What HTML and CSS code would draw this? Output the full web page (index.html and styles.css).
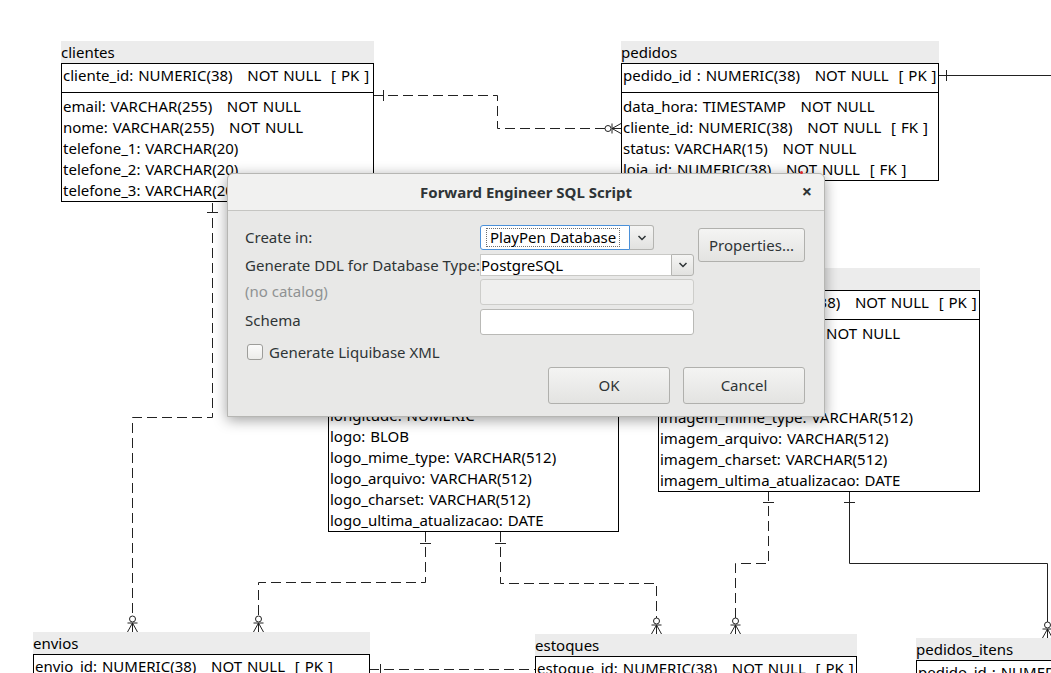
FILE: index.html
```html
<!DOCTYPE html>
<html>
<head>
<meta charset="utf-8">
<link rel="stylesheet" href="styles.css">
</head>
<body>
<div class="canvas">
  <svg class="links" width="1051" height="673" viewBox="0 0 1051 673">
    <defs>
      <g id="cf">
        <circle cx="0" cy="-13" r="3" fill="none" stroke="#222" stroke-width="1"/>
        <path d="M-5 -9 H5 M0 -9 L-5 0 M0 -9 V0 M0 -9 L5 0" fill="none" stroke="#222" stroke-width="1"/>
      </g>
    </defs>
    <g fill="none" stroke="#222" stroke-width="1">
      <path class="dash" d="M373 95.5 H497.5 V128.5 H608"/>
      <path d="M383.5 90 V101"/>
      <path d="M938 75.5 H1051"/>
      <path d="M946.5 70 V81"/>
      <path class="dash" d="M212.5 203 V417.5 H132.5 V616"/>
      <path d="M207 212.5 H218"/>
      <path class="dash" d="M425.5 532 V582.5 H258.5 V616"/>
      <path d="M420 543.5 H431"/>
      <path class="dash" d="M500.5 532 V583.5 H656.5 V618"/>
      <path d="M495 543.5 H506"/>
      <path class="dash" d="M768.5 491 V563.5 H735.5 V618"/>
      <path d="M763 502.5 H774"/>
      <path d="M849.5 491 V563.5 H1047.5 V622"/>
      <path d="M844 502.5 H855"/>
      <path class="dash" d="M369 669.5 H535"/>
      <path d="M380.5 664 V675"/>
    </g>
    <use href="#cf" transform="translate(621 128.5) rotate(-90)"/>
    <use href="#cf" transform="translate(132.5 632)"/>
    <use href="#cf" transform="translate(258.5 632)"/>
    <use href="#cf" transform="translate(656.5 634)"/>
    <use href="#cf" transform="translate(735.5 634)"/>
    <use href="#cf" transform="translate(1047.5 638)"/>
  </svg>

  <div class="tbl t-clientes">
    <div class="tbl-title">clientes</div>
    <div class="tbl-box">
      <div class="pk">cliente_id: NUMERIC(38)   NOT NULL  [ PK ]</div>
      <div class="cols">
        <div>email: VARCHAR(255)   NOT NULL</div>
        <div>nome: VARCHAR(255)   NOT NULL</div>
        <div>telefone_1: VARCHAR(20)</div>
        <div>telefone_2: VARCHAR(20)</div>
        <div>telefone_3: VARCHAR(20)</div>
      </div>
    </div>
  </div>

  <div class="tbl t-pedidos">
    <div class="tbl-title">pedidos</div>
    <div class="tbl-box">
      <div class="pk">pedido_id : NUMERIC(38)   NOT NULL  [ PK ]</div>
      <div class="cols">
        <div>data_hora: TIMESTAMP   NOT NULL</div>
        <div>cliente_id: NUMERIC(38)   NOT NULL  [ FK ]</div>
        <div>status: VARCHAR(15)   NOT NULL</div>
        <div>loja_id: NUMERIC(38)   NOT NULL  [ FK ]</div>
      </div>
    </div>
  </div>

  <div class="tbl t-lojas">
    <div class="tbl-title">lojas</div>
    <div class="tbl-box">
      <div class="pk">loja_id: NUMERIC(38)   NOT NULL  [ PK ]</div>
      <div class="cols">
        <div>nome: VARCHAR(255)   NOT NULL</div>
        <div>cnpj: VARCHAR(14)   NOT NULL</div>
        <div>endereco: VARCHAR(255)</div>
        <div>cidade: VARCHAR(100)</div>
        <div>estado: VARCHAR(2)</div>
        <div>telefone: VARCHAR(20)</div>
        <div>latitude: NUMERIC</div>
        <div>longitude: NUMERIC</div>
        <div>logo: BLOB</div>
        <div>logo_mime_type: VARCHAR(512)</div>
        <div>logo_arquivo: VARCHAR(512)</div>
        <div>logo_charset: VARCHAR(512)</div>
        <div>logo_ultima_atualizacao: DATE</div>
      </div>
    </div>
  </div>

  <div class="tbl t-produtos">
    <div class="tbl-title">produtos</div>
    <div class="tbl-box">
      <div class="pk">produto_id: NUMERIC(38)   NOT NULL  [ PK ]</div>
      <div class="cols">
        <div>nome: VARCHAR(255)   NOT NULL</div>
        <div>preco: NUMERIC(10, 2)</div>
        <div>descricao: TEXT</div>
        <div>imagem: BLOB</div>
        <div>imagem_mime_type: VARCHAR(512)</div>
        <div>imagem_arquivo: VARCHAR(512)</div>
        <div>imagem_charset: VARCHAR(512)</div>
        <div>imagem_ultima_atualizacao: DATE</div>
      </div>
    </div>
  </div>

  <div class="tbl t-envios">
    <div class="tbl-title">envios</div>
    <div class="tbl-box">
      <div class="pk">envio_id: NUMERIC(38)   NOT NULL  [ PK ]</div>
    </div>
  </div>

  <div class="tbl t-estoques">
    <div class="tbl-title">estoques</div>
    <div class="tbl-box">
      <div class="pk">estoque_id: NUMERIC(38)   NOT NULL  [ PK ]</div>
    </div>
  </div>

  <div class="tbl t-itens">
    <div class="tbl-title">pedidos_itens</div>
    <div class="tbl-box">
      <div class="pk">pedido_id : NUMERIC(38)   NOT NULL  [ PK ]</div>
    </div>
  </div>

  <div class="dialog">
    <div class="dlg-title">
      <span>Forward Engineer SQL Script</span>
      <span class="dlg-close">×</span>
    </div>
    <div class="dlg-body">
      <div class="form">
        <div class="lbl l1">Create in:</div>
        <div class="combo-a">
          <div class="combo-a-field"><span class="focus">PlayPen Database</span></div>
          <div class="arrow-btn"><svg width="10" height="6" viewBox="0 0 10 6"><path d="M1.5 1 L5 4.5 L8.5 1" fill="none" stroke="#2e3436" stroke-width="1.5"/></svg></div>
        </div>
        <div class="btn props">Properties...</div>

        <div class="lbl l2">Generate DDL for Database Type:</div>
        <div class="combo-b">
          <div class="combo-b-field">PostgreSQL</div>
          <div class="arrow-btn small"><svg width="10" height="6" viewBox="0 0 10 6"><path d="M1.5 1 L5 4.5 L8.5 1" fill="none" stroke="#2e3436" stroke-width="1.5"/></svg></div>
        </div>

        <div class="lbl l3 muted">(no catalog)</div>
        <div class="field disabled"></div>

        <div class="lbl l4">Schema</div>
        <div class="field schema"></div>
      </div>
      <div class="check-row">
        <span class="checkbox"></span>
        <span>Generate Liquibase XML</span>
      </div>
      <div class="actions">
        <div class="btn big">OK</div>
        <div class="btn big">Cancel</div>
      </div>
    </div>
  </div>
  <div class="reddot"></div>
</div>
</body>
</html>
```

FILE: styles.css
```css
html, body {
  margin: 0;
  padding: 0;
  background: #ffffff;
}

.canvas {
  position: relative;
  width: 1051px;
  height: 673px;
  overflow: hidden;
  background: #ffffff;
  font-family: "Noto Sans", "DejaVu Sans", sans-serif;
}

.links {
  position: absolute;
  left: 0;
  top: 0;
}

.links .dash {
  stroke-dasharray: 10 5;
}

/* ---------- diagram tables ---------- */
.tbl {
  position: absolute;
  box-sizing: border-box;
  font-size: 15px;
  word-spacing: 1px;
  color: #000;
}

.tbl-title {
  height: 22px;
  line-height: 22px;
  background: #ececec;
  white-space: pre;
  overflow: hidden;
}

.tbl-box {
  border: 1px solid #000;
  background: #ffffff;
}

.pk {
  white-space: pre;
  line-height: 21px;
  height: 21px;
  padding: 1px 0 6px 1px;
  border-bottom: 1px solid #000;
  overflow: hidden;
}

.cols {
  padding: 3px 0 0 1px;
}

.cols div {
  white-space: pre;
  line-height: 21px;
  height: 21px;
  overflow: hidden;
}

.t-clientes { left: 61px; top: 41px; width: 313px; }
.t-pedidos { left: 621px; top: 41px; width: 318px; }
.t-lojas { left: 328px; top: 203px; width: 291px; }
.t-produtos { left: 658px; top: 268px; width: 322px; }
.t-envios { left: 33px; top: 632px; width: 337px; }
.t-estoques { left: 535px; top: 634px; width: 322px; }
.t-itens { left: 916px; top: 638px; width: 200px; }

/* ---------- dialog ---------- */
.dialog {
  position: absolute;
  left: 227px;
  top: 173px;
  width: 598px;
  height: 244px;
  box-sizing: border-box;
  background: #e8e8e7;
  border: 1px solid #b6b6b3;
  border-radius: 6px 6px 0 0;
  box-shadow: 0 3px 14px rgba(0, 0, 0, 0.38);
  color: #2e3436;
  font-family: "Noto Sans", "DejaVu Sans", sans-serif;
  font-size: 15px;
  display: flex;
  flex-direction: column;
}

.dlg-title {
  height: 36px;
  flex: none;
  background: #f1f1f0;
  border-bottom: 1px solid #c5c5c2;
  border-radius: 6px 6px 0 0;
  display: flex;
  align-items: center;
  justify-content: center;
  position: relative;
  font-weight: bold;
  font-size: 15px;
  color: #2e3436;
}

.dlg-close {
  position: absolute;
  right: 12px;
  top: 7px;
  font-size: 18px;
  font-weight: bold;
  color: #2e3436;
  line-height: 20px;
}

.dlg-body {
  padding: 14px 19px 12px 17px;
  display: flex;
  flex-direction: column;
}

.form {
  display: grid;
  grid-template-columns: 231px 214px 107px;
  column-gap: 4px;
  grid-template-rows: 25px 22px 26px 26px;
  row-gap: 3.5px;
}

.lbl {
  align-self: center;
  white-space: nowrap;
}

.l1 { grid-row: 1; grid-column: 1; margin-top: -2px; }
.l2 { grid-row: 2; grid-column: 1; }
.l3 { grid-row: 3; grid-column: 1; margin-top: -3px; }
.l4 { grid-row: 4; grid-column: 1; margin-top: -4px; }

.muted { color: #8f9293; }

.combo-a {
  grid-row: 1;
  grid-column: 2;
  display: flex;
  width: 174px;
}

.combo-a-field {
  flex: 1;
  box-sizing: border-box;
  background: #ffffff;
  border: 1px solid #4a90d9;
  border-radius: 3px 0 0 3px;
  display: flex;
  align-items: center;
  padding-left: 5px;
  color: #000;
}

.focus {
  border: 1px dotted #6d6d6d;
  padding: 0 3px 0 3px;
  line-height: 17px;
  white-space: nowrap;
}

.arrow-btn {
  width: 24px;
  box-sizing: border-box;
  border: 1px solid #b4b4b1;
  border-left: none;
  border-radius: 0 3px 3px 0;
  background: linear-gradient(#f5f5f4, #e2e2e0);
  display: flex;
  align-items: center;
  justify-content: center;
}

.arrow-btn.small {
  width: 23px;
  border-left: 1px solid #b4b4b1;
}

.combo-b {
  grid-row: 2;
  grid-column: 2;
  display: flex;
}

.combo-b-field {
  flex: 1;
  background: #ffffff;
  border: 1px solid #c9c9c6;
  border-right: none;
  line-height: 20px;
  color: #000;
}

.field {
  box-sizing: border-box;
  background: #ffffff;
  border: 1px solid #b9b9b6;
  border-radius: 3px;
}

.field.disabled {
  background: #efefee;
  border-color: #cdcdca;
  grid-row: 3;
  grid-column: 2;
}

.field.schema {
  grid-row: 4;
  grid-column: 2;
}

.btn {
  box-sizing: border-box;
  border: 1px solid #b0b0ad;
  border-radius: 3px;
  background: linear-gradient(#f4f4f3, #e3e3e1);
  display: flex;
  align-items: center;
  justify-content: center;
  color: #2e3436;
}

.props {
  grid-column: 3;
  grid-row: 1 / span 2;
  align-self: start;
  margin-top: 3px;
  height: 34px;
}

.check-row {
  display: flex;
  align-items: center;
  gap: 6px;
  margin-top: 8px;
  padding-left: 2px;
  height: 18px;
}

.checkbox {
  width: 14px;
  height: 14px;
  border: 1px solid #9d9d9a;
  border-radius: 3px;
  background: linear-gradient(#fbfbfb, #ececea);
}

.actions {
  display: flex;
  justify-content: flex-end;
  gap: 13px;
  margin-top: 6px;
}

.btn.big {
  width: 122px;
  height: 37px;
}

.reddot {
  position: absolute;
  left: 800px;
  top: 171px;
  width: 3px;
  height: 3px;
  border-radius: 50%;
  background: #e0262b;
}
```
